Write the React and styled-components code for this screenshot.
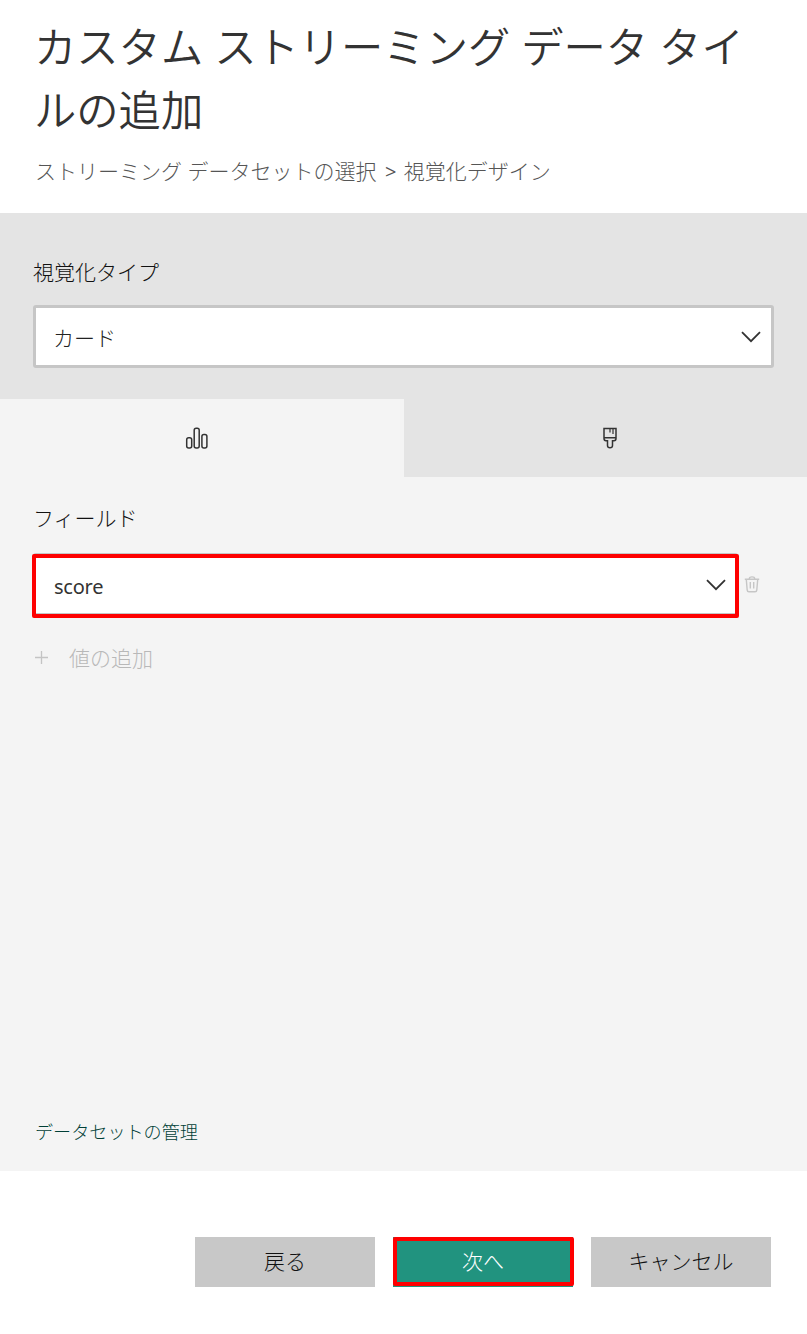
import React from "react";
import styled, { createGlobalStyle, css } from "styled-components";

const GlobalStyle = createGlobalStyle`
  *, *::before, *::after { box-sizing: border-box; }
  body {
    margin: 0;
    background: #fff;
    color: #333;
    font-family: "Open Sans", "Noto Sans CJK JP", sans-serif;
    font-size: 21px;
    font-weight: 300;
  }
  button, h1, p { margin: 0; font: inherit; }
`;

const Dialog = styled.main`
  display: flex;
  flex-direction: column;
  width: 807px;
  height: 1334px;
`;

const Header = styled.header`
  height: 213px;
  padding: 15px 24px 0 34px;
`;

const Title = styled.h1`
  && {
    font-size: 42.3px;
    line-height: 63px;
    font-weight: 350;
    color: #333;
  }
`;

const Breadcrumb = styled.p`
  && {
    margin: 15px 0 0 1px;
    line-height: 30px;
    color: #555;
  }
`;

const Separator = styled.span`
  margin: 0 2px 0 3px;
  font-size: 20px;
  font-weight: 400;
`;

const TypeSection = styled.section`
  height: 186px;
  padding: 44px 33px 0;
  background: #e4e4e4;
`;

const Label = styled.div`
  line-height: 30px;
  color: #111;
`;

const marked = css`
  position: relative;
  &::after {
    content: "";
    position: absolute;
    border: 4px solid #fe0000;
    border-radius: 2px;
    pointer-events: none;
    inset: ${(p) => p.$markInset};
  }
`;

const Select = styled.div`
  display: flex;
  align-items: center;
  justify-content: space-between;
  width: ${(p) => p.$width}px;
  height: 63px;
  padding: 1px ${(p) => p.$endPadding}px 0 17px;
  border: 3px solid #c6c6c6;
  border-radius: 3px;
  background: #fff;
  color: #222;
  ${(p) => p.$markInset && marked}
`;

const TypeSelect = styled(Select)`
  margin-top: 18px;
`;

const LatinValue = styled.span`
  padding: 2px 0 0 1px;
  font-family: "Noto Sans", "Open Sans", sans-serif;
  font-size: 20px;
  font-weight: 400;
  letter-spacing: -0.25px;
  color: #333;
`;

const Tabs = styled.nav`
  display: grid;
  grid-template-columns: 404px 403px;
  height: 78px;
`;

const Tab = styled.button`
  display: flex;
  align-items: center;
  justify-content: center;
  padding: ${(p) => (p.$active ? "0 10px 0 0" : "0 0 0 9px")};
  border: 0;
  background: ${(p) => (p.$active ? "#f4f4f4" : "#e4e4e4")};
`;

const Fields = styled.section`
  display: flex;
  flex-direction: column;
  height: 694px;
  padding: 26px 33px 24px;
  background: #f4f4f4;
`;

const FieldRow = styled.div`
  display: flex;
  align-items: center;
  gap: 6px;
  margin-top: 20px;
`;

const AddValue = styled.div`
  display: flex;
  align-items: center;
  gap: 20px;
  margin-top: 27px;
  padding-left: 1px;
  line-height: 30px;
  color: #b8b8b8;
`;

const ManageLink = styled.a`
  margin: auto 0 0 2px;
  font-size: 18.1px;
  line-height: 30px;
  color: #003f36;
`;

const Footer = styled.footer`
  display: flex;
  justify-content: flex-end;
  gap: 18px;
  padding: 66px 36px 0 0;
`;

const Button = styled.button`
  width: 180px;
  height: 50px;
  padding: 0 0 4px;
  border: 0;
  background: ${(p) => (p.$primary ? "#21937f" : "#c8c8c8")};
  color: ${(p) => (p.$primary ? "#fff" : "#111")};
  ${(p) => p.$markInset && marked}
`;

const Chevron = () => (
  <svg width="20" height="12" viewBox="0 0 20 12" fill="none" stroke="#333" strokeWidth="1.8">
    <path d="M1 1.2 10 10.2 19 1.2" />
  </svg>
);

const BarsIcon = () => (
  <svg width="24" height="24" viewBox="0 0 24 24" fill="none" stroke="#333" strokeWidth="1.5">
    <rect x="1.7" y="11.8" width="5" height="10.2" rx="2" />
    <rect x="9.2" y="2.2" width="5" height="19.8" rx="2" />
    <rect x="16.9" y="8.5" width="5" height="13.5" rx="2" />
  </svg>
);

const BrushIcon = () => (
  <svg width="16" height="24" viewBox="0 0 16 24" fill="none" stroke="#333" strokeWidth="1.5">
    <path d="M2 2.5H14V12.6Q14 14.7 12 14.7H10.5V19.5Q10.5 21.8 8 21.8T5.5 19.5V14.7H4Q2 14.7 2 12.6ZM2 11.8H14" />
    <path d="M8 3V6.5M11 3V8" strokeWidth="1.2" />
  </svg>
);

const TrashIcon = () => (
  <svg width="16" height="18" viewBox="0 0 16 18" fill="none" stroke="#c6c6c6" strokeWidth="1.4">
    <path d="M.8 3.3H15.2M5.4 3.1V2.3Q5.4.9 8 .9T10.6 2.3V3.1M2.3 3.5 3.2 14.1Q3.3 15.7 5 15.7H11Q12.7 15.7 12.8 14.1L13.7 3.5M6.3 6V12.5M9.7 6V12.5" />
  </svg>
);

const PlusIcon = () => (
  <svg width="15" height="15" viewBox="0 0 15 15" stroke="#c4c4c4" strokeWidth="1.3">
    <path d="M1 6.5H14M7.5 0V13" />
  </svg>
);

export default function App() {
  return (
    <>
      <GlobalStyle />
      <Dialog>
        <Header>
          <Title>カスタム ストリーミング データ タイルの追加</Title>
          <Breadcrumb>
            ストリーミング データセットの選択 <Separator>&gt;</Separator> 視覚化デザイン
          </Breadcrumb>
        </Header>
        <TypeSection>
          <Label>視覚化タイプ</Label>
          <TypeSelect $width={741} $endPadding={10}>
            カード
            <Chevron />
          </TypeSelect>
        </TypeSection>
        <Tabs>
          <Tab $active aria-label="データ">
            <BarsIcon />
          </Tab>
          <Tab aria-label="書式">
            <BrushIcon />
          </Tab>
        </Tabs>
        <Fields>
          <Label>フィールド</Label>
          <FieldRow>
            <Select $width={705} $endPadding={9} $markInset="-2px -4px -5px -4px">
              <LatinValue>score</LatinValue>
              <Chevron />
            </Select>
            <TrashIcon />
          </FieldRow>
          <AddValue>
            <PlusIcon />
            値の追加
          </AddValue>
          <ManageLink>データセットの管理</ManageLink>
        </Fields>
        <Footer>
          <Button>戻る</Button>
          <Button $primary $markInset="0 -1px 1px 0">次へ</Button>
          <Button>キャンセル</Button>
        </Footer>
      </Dialog>
    </>
  );
}
